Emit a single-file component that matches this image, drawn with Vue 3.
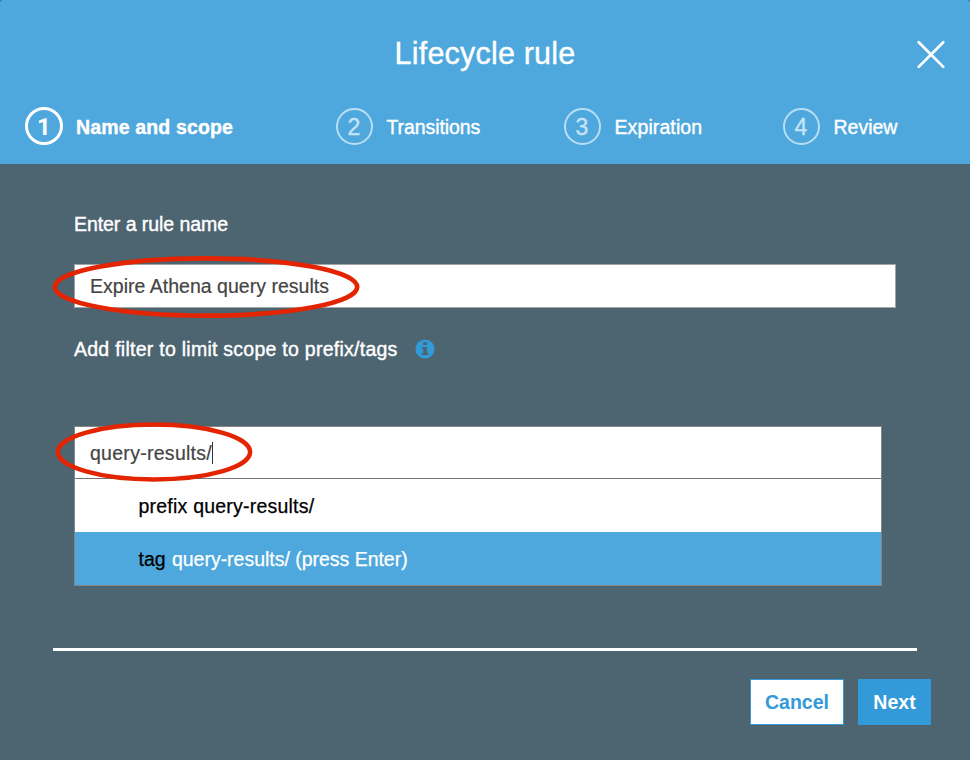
<script setup>
import { ref } from 'vue'

const steps = [
  { number: 1, label: 'Name and scope', name: 'scope' },
  { number: 2, label: 'Transitions', name: 'transitions' },
  { number: 3, label: 'Expiration', name: 'expiration' },
  { number: 4, label: 'Review', name: 'review' },
]
const current = ref(1)
</script>

<template>
  <div class="dialog">
    <header class="header">
      <div class="title-row">
        <h1 class="title"><span>Lifecycle rule</span></h1>
        <button class="close" aria-label="Close">
          <svg width="30" height="30" viewBox="0 0 30 30">
            <path d="M2.7 2.3 27.3 26.9M27.3 2.3 2.7 26.9" fill="none" stroke="#fff" stroke-width="2.7" stroke-linecap="round" />
          </svg>
        </button>
      </div>
      <nav class="steps">
        <div v-for="s in steps" :key="s.number" class="step" :class="[s.name, { active: s.number === current }]">
          <span class="circle">{{ s.number }}</span>
          <span class="step-label">{{ s.label }}</span>
        </div>
      </nav>
    </header>

    <main class="content">
      <div class="label"><span class="t-enter">Enter a rule name</span></div>
      <div class="field name-field">
        <span class="t-name">Expire Athena query results</span>
        <svg class="mark mark-name" width="310" height="66" viewBox="0 0 310 66">
          <ellipse cx="155" cy="33" rx="151.2" ry="28.6" fill="none" stroke="#e32400" stroke-width="4.7" />
        </svg>
      </div>
      <div class="label filter-label">
        <span class="t-filter">Add filter to limit scope to prefix/tags</span>
        <svg class="info" width="20" height="20" viewBox="0 0 20 20">
          <circle cx="10" cy="10" r="9.6" fill="#329ad9" />
          <path d="M8.2 3.2h3.7v2.7H8.2zM6.9 8h5v6h1.4v2.1H6.7V14h1.6v-4H6.9z" fill="#4d6471" />
        </svg>
      </div>
      <div class="combo">
        <div class="combo-input">
          <span class="t-query">query-results/</span><i class="caret"></i>
          <svg class="mark mark-query" width="200" height="62" viewBox="0 0 200 62">
            <ellipse cx="100" cy="31" rx="96.1" ry="27.4" fill="none" stroke="#e32400" stroke-width="4.5" />
          </svg>
        </div>
        <div class="option"><span class="t-prefix">prefix query-results/</span></div>
        <div class="option selected"><span class="t-tag"><b>tag</b> query-results/ (press Enter)</span></div>
      </div>
    </main>

    <footer class="footer">
      <button class="btn cancel"><span>Cancel</span></button>
      <button class="btn next"><span>Next</span></button>
    </footer>
  </div>
</template>

<style>
body { margin: 0; background: #4d6471; }
</style>

<style scoped>
.dialog {
  box-sizing: border-box;
  width: 970px;
  height: 760px;
  overflow: hidden;
  background: #4d6471;
  color: #fff;
  font: 19.5px/24px "Liberation Sans", Arial, sans-serif;
}
button { font: inherit; padding: 0; margin: 0; border: 0; }
.header { height: 163.5px; border-radius: 3px 3px 0 0; background: #4ea8dd; }
.title-row { display: grid; grid-template-columns: 70px 1fr 70px; height: 107px; }
.title { grid-column: 2; margin: 0; padding-top: 35px; font-size: 30.5px; letter-spacing: 0.2px; line-height: 36px; font-weight: 400; text-align: center; -webkit-text-stroke: 0.35px; }
.close { display: flex; width: 30px; height: 30px; margin: 40px 0 0 16px; background: none; }
.steps { display: grid; grid-template-columns: 310.5px 228px 219px 1fr; padding-left: 25px; }
.step { display: flex; align-items: center; height: 38px; gap: 14px; -webkit-text-stroke: 0.4px; }
.step-label { padding-top: 1px; white-space: nowrap; }
.transitions .step-label { letter-spacing: -0.08px; }
.expiration .step-label { letter-spacing: 0.1px; }
.circle {
  box-sizing: border-box;
  width: 37px;
  height: 37px;
  border: 2px solid #b9def3;
  border-radius: 50%;
  color: #c5e4f5;
  font-size: 23px;
  line-height: 35px;
  text-align: center;
}
.active .circle { width: 38px; height: 38px; border: 3px solid #fff; color: #fff; font-family: Roboto, "Liberation Sans", sans-serif; font-weight: 700; font-size: 24px; line-height: 34px; -webkit-text-stroke: 0; }
.active { font-weight: 700; gap: 13px; }
.active .step-label { letter-spacing: 0.15px; }
.content { padding: 48.5px 53px 0 74px; }
.label { display: flex; align-items: center; height: 24px; -webkit-text-stroke: 0.4px; }
.t-enter { letter-spacing: -0.06px; }
.t-name { letter-spacing: 0.02px; -webkit-text-stroke: 0.2px; }
.t-filter { letter-spacing: 0.26px; }
.t-query { letter-spacing: 0.28px; -webkit-text-stroke: 0.2px; }
.t-prefix { letter-spacing: 0.22px; }
.t-tag { letter-spacing: -0.02px; }
.field, .combo-input { position: relative; display: flex; align-items: center; box-sizing: border-box; background: #fff; color: #444; }
.name-field { width: 822px; height: 44px; margin-top: 28px; padding-left: 15px; border: 1px solid #a0a5a8; }
.mark { position: absolute; overflow: visible; }
.mark-name { left: -24.5px; top: -11px; }
.mark-query { left: -21.5px; top: -6px; }
.filter-label { margin-top: 29px; }
.info { margin-left: 17.5px; }
.combo { box-sizing: border-box; width: 808px; height: 160px; margin-top: 65px; border: 1px solid #858585; }
.combo-input { height: 52px; padding-left: 15px; border-bottom: 1px solid #747474; }
.caret { width: 1px; height: 22px; margin-left: -0.5px; background: #333; }
.option { display: flex; align-items: center; height: 53px; padding-left: 63.5px; background: #fff; color: #000; -webkit-text-stroke: 0.25px; }
.selected { background: #4ea8dd; color: #fff; }
.selected b { color: #000; font-weight: 400; margin-right: 1px; }
.footer { display: flex; justify-content: flex-end; gap: 14px; box-sizing: border-box; margin: 62px 53px 0; padding-top: 28px; border-top: 3px solid #fff; }
.btn { flex: none; box-sizing: border-box; height: 46px; font-weight: 700; }
.cancel { width: 94px; background: #fff; color: #329ad9; border: 1.5px solid #329ad9; }
.next { width: 73px; margin-right: -14px; background: #329ad9; color: #fff; }
</style>
